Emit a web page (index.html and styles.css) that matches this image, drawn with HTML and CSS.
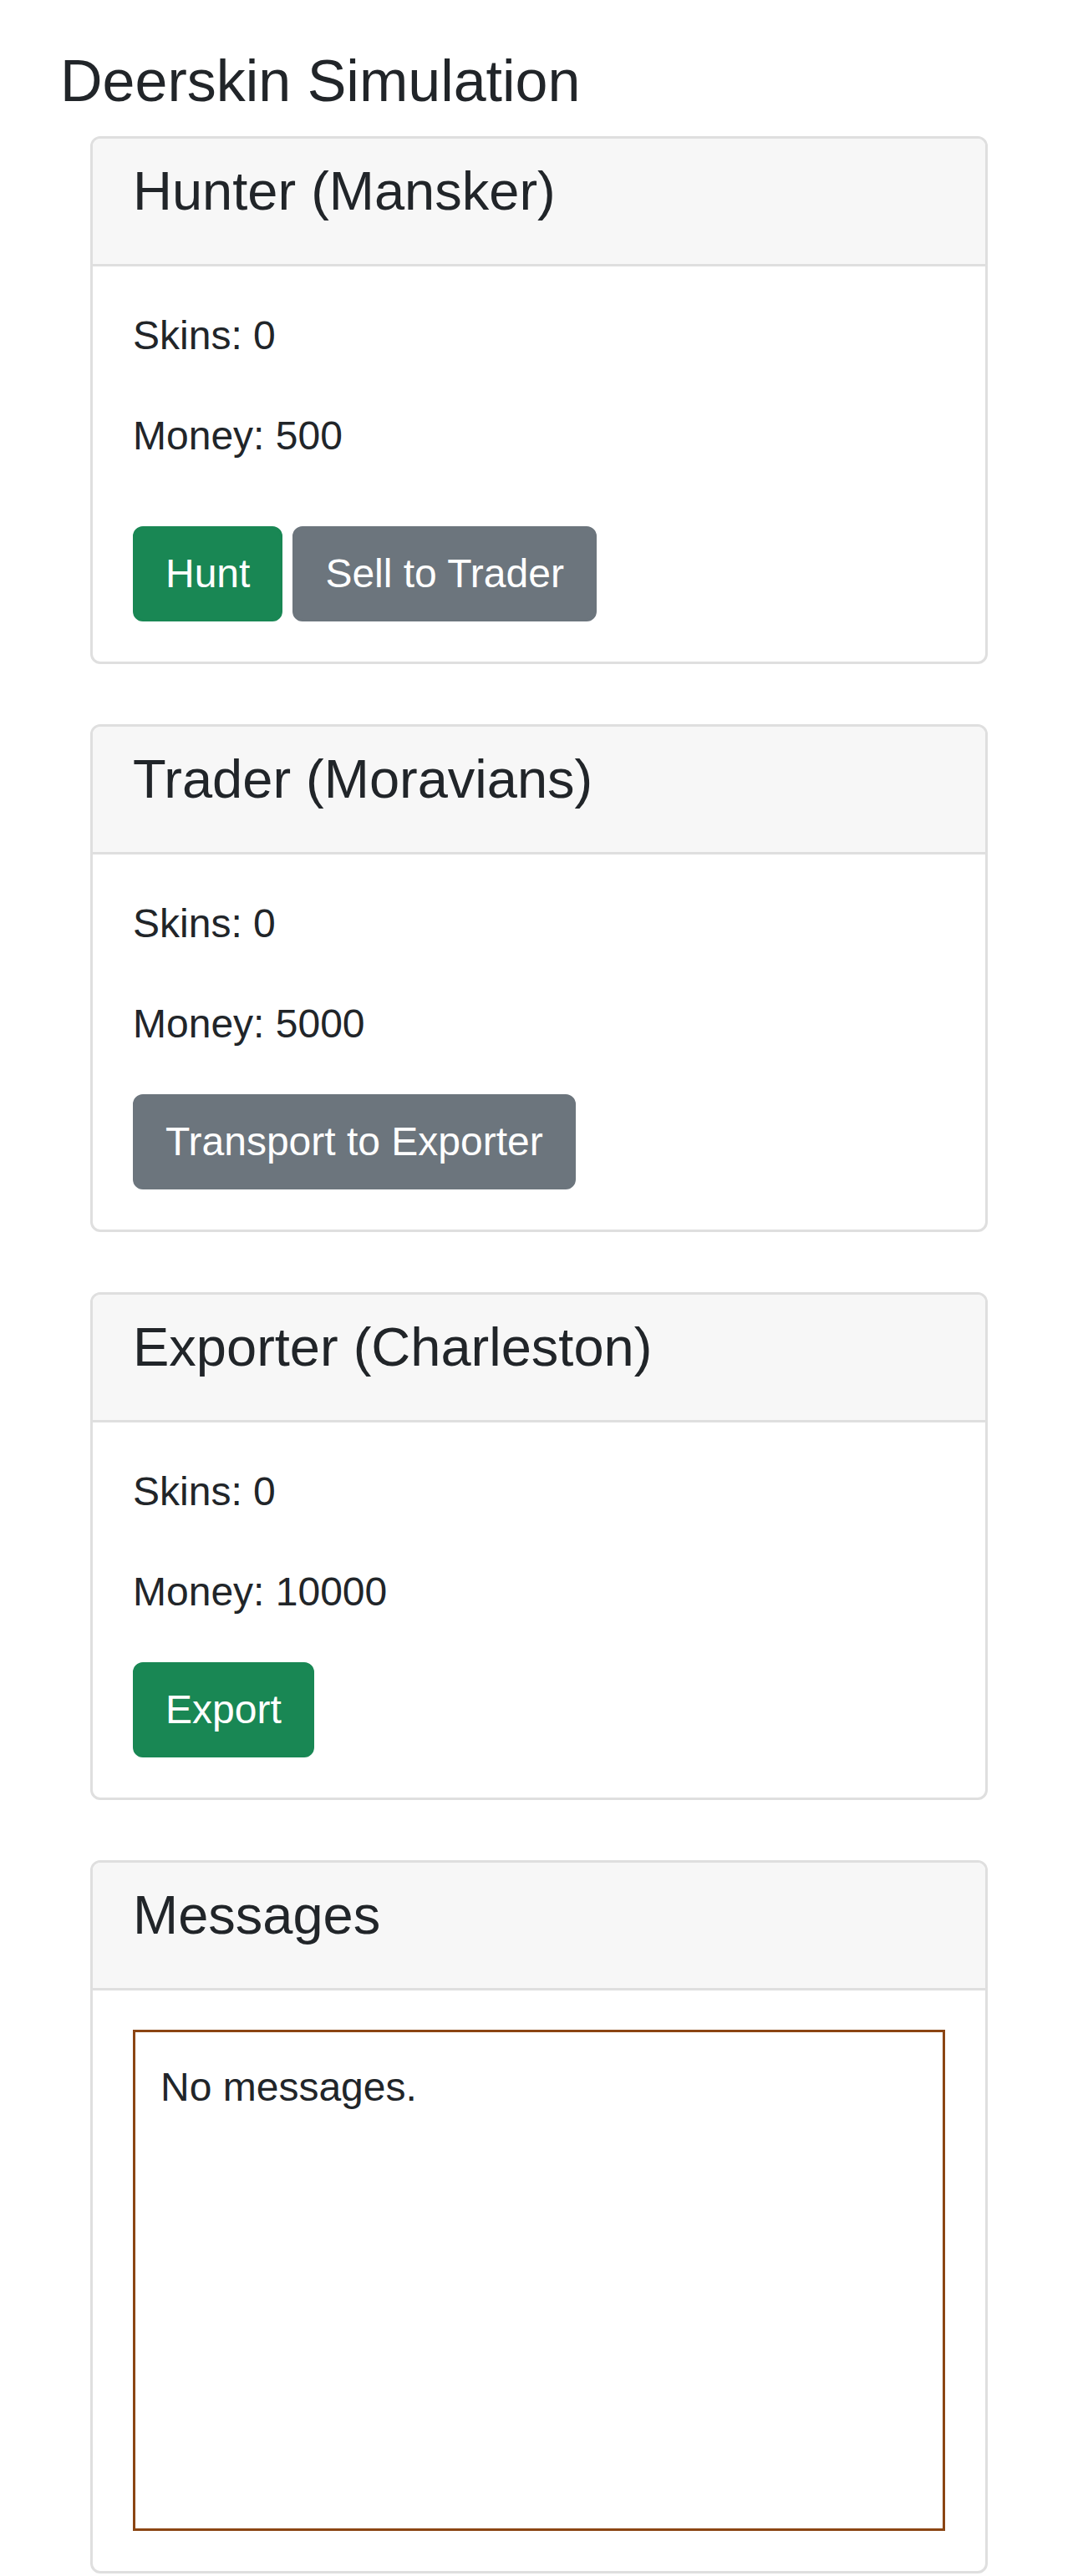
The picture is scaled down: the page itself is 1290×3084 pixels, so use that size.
FILE: index.html
```html
<!DOCTYPE html>
<html lang="en">
<head>
<meta charset="utf-8">
<title>Deerskin Simulation</title>
<link rel="stylesheet" href="styles.css">
</head>
<body>
<div class="container">
  <h3 class="page-title">Deerskin Simulation</h3>

  <div class="card">
    <div class="card-header"><h4 class="card-title">Hunter (Mansker)</h4></div>
    <div class="card-body">
      <p class="stat">Skins: 0</p>
      <p class="stat">Money: 500</p>
      <div class="actions actions-spaced">
        <button class="btn btn-success">Hunt</button>
        <button class="btn btn-secondary">Sell to Trader</button>
      </div>
    </div>
  </div>

  <div class="card">
    <div class="card-header"><h4 class="card-title">Trader (Moravians)</h4></div>
    <div class="card-body">
      <p class="stat">Skins: 0</p>
      <p class="stat">Money: 5000</p>
      <div class="actions">
        <button class="btn btn-secondary">Transport to Exporter</button>
      </div>
    </div>
  </div>

  <div class="card">
    <div class="card-header"><h4 class="card-title">Exporter (Charleston)</h4></div>
    <div class="card-body">
      <p class="stat">Skins: 0</p>
      <p class="stat">Money: 10000</p>
      <div class="actions">
        <button class="btn btn-success">Export</button>
      </div>
    </div>
  </div>

  <div class="card card-last">
    <div class="card-header"><h4 class="card-title">Messages</h4></div>
    <div class="card-body">
      <div class="messages">
        <p class="message">No messages.</p>
      </div>
    </div>
  </div>
</div>
</body>
</html>
```

FILE: styles.css
```css
* {
  box-sizing: border-box;
}

html, body {
  margin: 0;
  padding: 0;
  background: #ffffff;
}

body {
  font-family: "Liberation Sans", Arial, sans-serif;
  font-size: 48px;
  line-height: 1.5;
  color: #212529;
}

.container {
  padding: 55px 72px 0 72px;
}

.page-title {
  margin: 0 0 24px 0;
  font-size: 70px;
  font-weight: 400;
  line-height: 1.2;
}

.card {
  margin: 0 36px 72px 36px;
  border: 3px solid #dfdfdf;
  border-radius: 12px;
  background: #ffffff;
  overflow: hidden;
}

.card-last {
  margin-bottom: 0;
}

.card-header {
  padding: 24px 48px 24px 48px;
  background: #f7f7f7;
  border-bottom: 3px solid #dfdfdf;
}

.card-title {
  margin: 0 0 24px 0;
  font-size: 65px;
  font-weight: 400;
  line-height: 1.2;
}

.card-body {
  padding: 47px 48px 48px 48px;
}

.stat {
  margin: 0 0 48px 0;
}

.actions {
  display: flex;
  gap: 12px;
}

.actions-spaced {
  padding-top: 24px;
}

.btn {
  font-family: "Liberation Sans", Arial, sans-serif;
  font-size: 48px;
  line-height: 72px;
  padding: 18px 36px;
  border: 3px solid transparent;
  border-radius: 12px;
  color: #ffffff;
  cursor: pointer;
}

.btn-success {
  background: #198754;
  border-color: #198754;
}

.btn-secondary {
  background: #6c757d;
  border-color: #6c757d;
}

.messages {
  height: 600px;
  border: 3px solid #8b4513;
  padding: 30px;
  overflow-y: auto;
}

.message {
  margin: 0;
}
```
